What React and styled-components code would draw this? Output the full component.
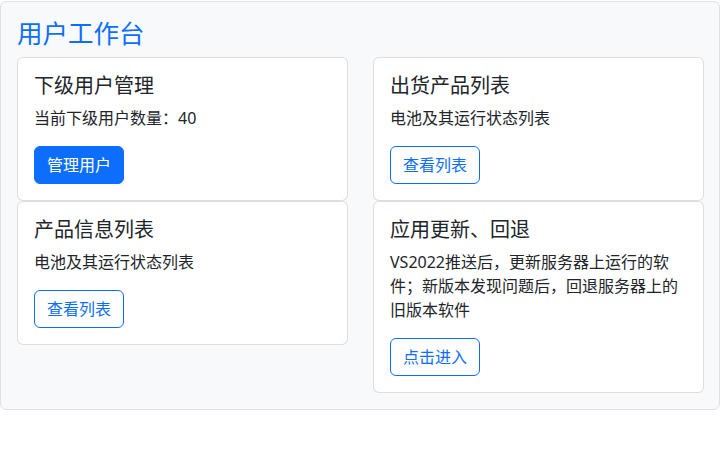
import React from "react";
import styled, { createGlobalStyle } from "styled-components";

const GlobalStyle = createGlobalStyle`
  body {
    margin: 0;
    padding-top: 1px;
    font-family: "Noto Sans", "Noto Sans CJK SC", sans-serif;
    color: #212529;
    background: #fff;
  }
`;

const Panel = styled.div`
  box-sizing: border-box;
  width: 720px;
  padding: 16px 15px 16px 16px;
  background-color: #f8f9fa;
  border: 1px solid #dee2e6;
  border-radius: 6px;
`;

const Heading = styled.h3`
  margin: 0 0 8px;
  font-size: 25.5px;
  font-weight: 400;
  line-height: 1.2;
  color: #0d6efd;
`;

const Columns = styled.div`
  display: grid;
  grid-template-columns: 1fr 1fr;
  column-gap: 25px;
  align-items: start;
`;

const Column = styled.div`
  display: flex;
  flex-direction: column;
`;

const Card = styled.div`
  background-color: #fff;
  border: 1px solid rgba(0, 0, 0, 0.13);
  border-radius: 6px;
  padding: 16px;
`;

const CardTitle = styled.h5`
  margin: 0 0 8px;
  font-size: 20px;
  font-weight: 400;
  line-height: 1.2;
`;

const CardText = styled.p`
  margin: 0 0 16px;
  font-size: 16px;
  line-height: 1.5;
`;

const Button = styled.button`
  font-family: inherit;
  font-size: 16px;
  line-height: 1.5;
  padding: 6px 12px;
  border-radius: 6px;
  border: 1px solid #0d6efd;
  cursor: pointer;
  color: ${(p) => (p.$solid ? "#fff" : "#0d6efd")};
  background-color: ${(p) => (p.$solid ? "#0d6efd" : "transparent")};
`;

const cards = [
  [
    {
      title: "下级用户管理",
      text: "当前下级用户数量：40",
      action: "管理用户",
      solid: true,
    },
    { title: "产品信息列表", text: "电池及其运行状态列表", action: "查看列表" },
  ],
  [
    { title: "出货产品列表", text: "电池及其运行状态列表", action: "查看列表" },
    {
      title: "应用更新、回退",
      text: "VS2022推送后，更新服务器上运行的软件；新版本发现问题后，回退服务器上的旧版本软件",
      action: "点击进入",
    },
  ],
];

const App = () => (
  <>
    <GlobalStyle />
    <Panel>
      <Heading>用户工作台</Heading>
      <Columns>
        {cards.map((col, i) => (
          <Column key={i}>
            {col.map((c) => (
              <Card key={c.title}>
                <CardTitle>{c.title}</CardTitle>
                <CardText>{c.text}</CardText>
                <Button $solid={c.solid}>{c.action}</Button>
              </Card>
            ))}
          </Column>
        ))}
      </Columns>
    </Panel>
  </>
);

export default App;
